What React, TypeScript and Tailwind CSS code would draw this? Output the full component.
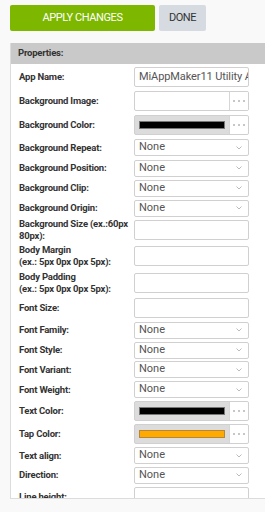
import React from 'react';

type Row = {
  label: React.ReactNode;
  kind: 'text' | 'select' | 'file' | 'color';
  value?: string;
  swatch?: string;
  h: string;
};

const rows: Row[] = [
  { label: 'App Name:', kind: 'text', value: 'MiAppMaker11 Utility App', h: 'h-[24px]' },
  { label: 'Background Image:', kind: 'file', h: 'h-[24px]' },
  { label: 'Background Color:', kind: 'color', swatch: 'bg-black border-[#777]', h: 'h-[24px]' },
  { label: 'Background Repeat:', kind: 'select', h: 'h-[21px]' },
  { label: 'Background Position:', kind: 'select', h: 'h-[20px]' },
  { label: 'Background Clip:', kind: 'select', h: 'h-[20px]' },
  { label: 'Background Origin:', kind: 'select', h: 'h-[20px]' },
  { label: <>Background Size (ex.:60px<br />80px):</>, kind: 'text', h: 'h-[24px]' },
  { label: <>Body Margin<br />(ex.: 5px 0px 0px 5px):</>, kind: 'text', h: 'h-[28px]' },
  { label: <>Body Padding<br />(ex.: 5px 0px 0px 5px):</>, kind: 'text', h: 'h-[25px]' },
  { label: 'Font Size:', kind: 'text', h: 'h-[25px]' },
  { label: 'Font Family:', kind: 'select', h: 'h-[20px]' },
  { label: 'Font Style:', kind: 'select', h: 'h-[20px]' },
  { label: 'Font Variant:', kind: 'select', h: 'h-[19px]' },
  { label: 'Font Weight:', kind: 'select', h: 'h-[21px]' },
  { label: 'Text Color:', kind: 'color', swatch: 'bg-black border-[#777]', h: 'h-[21px]' },
  { label: 'Tap Color:', kind: 'color', swatch: 'bg-[#ffaa00] border-[#b8863a]', h: 'h-[25px]' },
  { label: 'Text align:', kind: 'select', h: 'h-[19px]' },
  { label: 'Direction:', kind: 'select', h: 'h-[20px]' },
  { label: 'Line height:', kind: 'text', h: 'h-[24px]' },
];

const Dots = () => (
  <div className="flex w-[19px] h-full shrink-0 items-center justify-center gap-[3px] border-l border-[#d6d6d6] bg-white">
    <span className="w-[2px] h-[2px] rounded-full bg-[#b5b5b5]" />
    <span className="w-[2px] h-[2px] rounded-full bg-[#b5b5b5]" />
    <span className="w-[2px] h-[2px] rounded-full bg-[#b5b5b5]" />
  </div>
);

const Control = ({ row }: { row: Row }) => {
  if (row.kind === 'select') {
    return (
      <div className="flex h-[17px] w-[115px] items-center justify-between rounded-[2px] border border-[#d0d0d0] bg-white pl-[4px] pr-[6px] text-[11px] text-[#555]">
        <span>None</span>
        <svg width="6" height="4" viewBox="0 0 6 4" className="text-[#aaa]">
          <polyline points="0.5,0.5 3,3 5.5,0.5" fill="none" stroke="currentColor" strokeWidth="0.8" />
        </svg>
      </div>
    );
  }
  if (row.kind === 'file') {
    return (
      <div className="flex h-[20px] w-[115px] overflow-hidden rounded-[2px] border border-[#d0d0d0] bg-white">
        <div className="flex-1" />
        <Dots />
      </div>
    );
  }
  if (row.kind === 'color') {
    return (
      <div className="flex h-[20px] w-[115px] overflow-hidden rounded-[2px] border border-[#d0d0d0] bg-[#dcdcdc]">
        <div className="flex flex-1 items-center px-[4px]">
          <div className={`h-[8px] w-full border ${row.swatch}`} />
        </div>
        <Dots />
      </div>
    );
  }
  return (
    <div className="flex h-[20px] w-[115px] items-center overflow-hidden whitespace-nowrap rounded-[2px] border border-[#d0d0d0] bg-white pl-[4px] text-[11px] tracking-[-0.1px] text-[#555]">
      {row.value}
    </div>
  );
};

export default function App() {
  return (
    <div className="min-h-screen bg-[#f9f9f9] font-['Roboto',_'Liberation_Sans',_sans-serif]">
      <div className="flex gap-[4px] pl-[10px] pt-[5px]">
        <button className="h-[26px] w-[145px] rounded-[2px] bg-[#7db700] text-[11px] tracking-[-0.4px] text-white">
          APPLY CHANGES
        </button>
        <button className="h-[26px] w-[47px] rounded-[2px] bg-[#d5dbe0] text-[11px] tracking-[-0.5px] text-[#333]">
          DONE
        </button>
      </div>

      <div className="ml-[10px] mt-[12px] h-[456px] overflow-hidden border-b border-l border-[#dcdcdc] bg-white">
        <div className="flex h-[21px] items-center bg-[#c9c9c9] pl-[7px] text-[9.5px] font-bold tracking-[-0.2px] text-[#333]">
          Properties:
        </div>
        <div className="flex flex-col pt-[1px]">
          {rows.map((row, i) => (
            <div key={i} className={`flex items-center ${row.h}`}>
              <div className="w-[123px] shrink-0 whitespace-nowrap pl-[8px] text-[9.5px] font-bold leading-[12px] tracking-[-0.2px] text-[#333]">
                {row.label}
              </div>
              <Control row={row} />
            </div>
          ))}
        </div>
      </div>
    </div>
  );
}
